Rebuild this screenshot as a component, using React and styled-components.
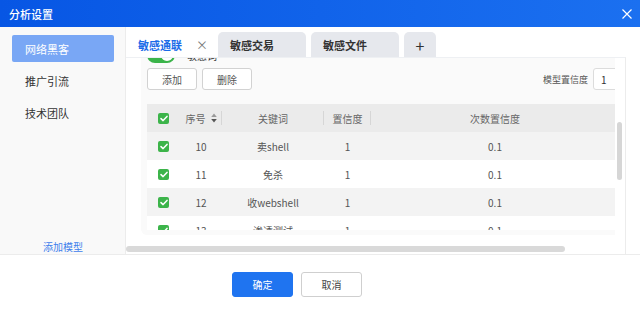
import React, { useLayoutEffect, useRef } from 'react';
import styled, { createGlobalStyle } from 'styled-components';

const GlobalStyle = createGlobalStyle`
  html, body { margin: 0; padding: 0; background: #fff; }
  body { font-family: "Noto Sans CJK SC", "Noto Sans", sans-serif; color: #333; }
  * { box-sizing: border-box; }
`;

const Dialog = styled.div`
  width: 640px;
  height: 311px;
  display: flex;
  flex-direction: column;
  background: #fff;
  overflow: hidden;
`;

const Header = styled.div`
  height: 27px;
  flex: none;
  display: flex;
  align-items: center;
  justify-content: space-between;
  padding: 0 8px 0 9px;
  background: linear-gradient(90deg, #0756e4, #1b70f0);
  color: #fff;
`;

const Title = styled.div`
  font-size: 11px;
  font-weight: 500;
`;

const Body = styled.div`
  height: 228px;
  flex: none;
  display: flex;
  border-bottom: 1px solid #ececec;
`;

const Sidebar = styled.div`
  width: 126px;
  flex: none;
  background: #f9f9f9;
  border-right: 1px solid #ececec;
  display: flex;
  flex-direction: column;
  gap: 5px;
  padding: 8px 11px 0 12px;
`;

const SideItem = styled.div`
  height: 27px;
  flex: none;
  display: flex;
  align-items: center;
  padding-left: 13px;
  font-size: 11px;
  border-radius: 2px;
  color: ${(p) => (p.$active ? '#fff' : '#333')};
  background: ${(p) => (p.$active ? '#79a7f5' : 'transparent')};
`;

const AddModel = styled.div`
  margin-top: auto;
  height: 15px;
  text-align: center;
  font-size: 10px;
  color: #3e80ec;
  line-height: 15px;
`;

const Main = styled.div`
  flex: 1;
  display: flex;
  flex-direction: column;
  min-width: 0;
`;

const TabBar = styled.div`
  height: 30px;
  flex: none;
  display: flex;
  align-items: flex-end;
  gap: 5px;
`;

const ActiveTab = styled.div`
  width: 87px;
  height: 25px;
  display: flex;
  align-items: center;
  justify-content: space-between;
  padding: 0 5px 0 12px;
  font-size: 11px;
  font-weight: 700;
  color: #1a6be8;
  background: #fff;
`;

const TabClose = styled.span`
  font-size: 12px;
  font-weight: 400;
  color: #777;
`;

const Tab = styled.div`
  width: ${(p) => p.$w || 88}px;
  height: 25px;
  display: flex;
  align-items: center;
  justify-content: ${(p) => (p.$center ? 'center' : 'flex-start')};
  padding-left: ${(p) => (p.$center ? 0 : 12)}px;
  font-size: ${(p) => (p.$center ? 16 : 11)}px;
  font-weight: ${(p) => (p.$center ? 400 : 700)};
  color: #333;
  background: #e6e8ed;
  border-radius: 5px 5px 0 0;
`;

const ScrollArea = styled.div`
  width: 500px;
  height: 197px;
  flex: none;
  display: flex;
  flex-direction: column;
  border-top: 1px solid #eef0f3;
  border-right: 1px solid #ececec;
`;

const ScrollBody = styled.div`
  height: 187px;
  flex: none;
  display: flex;
`;

const Viewport = styled.div`
  flex: 1;
  min-width: 0;
  overflow: hidden;
  padding: 0 0 30px 15px;
`;

const Gutter = styled.div`
  width: 10px;
  flex: none;
  padding: 64px 0 0 2px;
`;

const VThumb = styled.div`
  width: 5px;
  height: 58px;
  border-radius: 3px;
  background: #d6d6d6;
`;

const HBar = styled.div`
  height: 8px;
  flex: none;
  padding: 1px 0;
`;

const HThumb = styled.div`
  width: 439px;
  height: 6px;
  border-radius: 3px;
  background: #d9d9d9;
`;

const Card = styled.div`
  width: 500px;
  background: #fafafa;
  border-radius: 6px;
  padding: 10px 6px 5px;
`;

const SwitchRow = styled.div`
  height: 16px;
  display: flex;
  align-items: center;
  gap: 12px;
  font-size: 10px;
  color: #333;
`;

const Switch = styled.div`
  width: 28px;
  height: 16px;
  border-radius: 8px;
  background: #3bb44a;
  display: flex;
  align-items: center;
  justify-content: flex-end;
  padding-right: 2px;
  &::after {
    content: '';
    width: 12px;
    height: 12px;
    border-radius: 50%;
    background: #fff;
  }
`;

const Toolbar = styled.div`
  margin-top: 5px;
  height: 22px;
  display: flex;
  align-items: center;
  gap: 5px;
`;

const Btn = styled.button`
  width: 50px;
  height: 22px;
  border: 1px solid #d2d2d2;
  border-radius: 3px;
  background: #fff;
  font-family: inherit;
  font-size: 10px;
  color: #555;
  padding: 0;
`;

const RightGroup = styled.div`
  margin-left: auto;
  display: flex;
  align-items: center;
  gap: 5px;
  font-size: 9px;
  color: #555;
`;

const NumInput = styled.div`
  width: 42px;
  height: 22px;
  border: 1px solid #dcdcdc;
  border-radius: 3px;
  background: #fff;
  display: flex;
  align-items: center;
  padding-left: 7px;
  font-size: 10px;
  color: #333;
`;

const TableBox = styled.div`
  margin-top: 14px;
  width: 472px;
  height: 126px;
  overflow: hidden;
`;

const Row = styled.div`
  display: grid;
  grid-template-columns: 33px 42px 102px 47px 1fr;
  height: 28px;
  align-items: center;
  font-size: 10px;
  color: ${(p) => (p.$head ? '#666' : '#555')};
  background: ${(p) => (p.$head ? '#ebebeb' : p.$odd ? '#f3f3f3' : '#fff')};
`;

const Cell = styled.div`
  height: 28px;
  display: flex;
  align-items: center;
  justify-content: center;
  gap: 5px;
  position: relative;
  ${(p) =>
    p.$sep &&
    `&::after {
      content: '';
      position: absolute;
      right: 0;
      top: 7px;
      width: 1px;
      height: 14px;
      background: #d6d6d6;
    }`}
`;

const Check = styled.div`
  width: 11px;
  height: 11px;
  border-radius: 2px;
  background: #3cb44a;
  display: flex;
  align-items: center;
  justify-content: center;
`;

const Footer = styled.div`
  flex: 1;
  display: flex;
  align-items: center;
  justify-content: center;
  gap: 8px;
  padding: 3px 46px 0 0;
`;

const FootBtn = styled.button`
  width: 61px;
  height: 25px;
  border-radius: 3px;
  font-family: inherit;
  font-size: 10px;
  padding: 0;
  border: 1px solid ${(p) => (p.$primary ? '#1f74f0' : '#cfcfcf')};
  background: ${(p) => (p.$primary ? '#1f74f0' : '#fff')};
  color: ${(p) => (p.$primary ? '#fff' : '#444')};
`;

const CheckMark = () => (
  <Check>
    <svg width="8" height="7" viewBox="0 0 8 7">
      <path d="M1 3.6 L3.1 5.6 L7 1.4" fill="none" stroke="#fff" strokeWidth="1.5" strokeLinecap="round" strokeLinejoin="round" />
    </svg>
  </Check>
);

const SortIcon = () => (
  <svg width="6" height="10" viewBox="0 0 6 10">
    <path d="M3 0.5 L5.8 4 L0.2 4 Z" fill="#9a9a9a" />
    <path d="M3 9.5 L5.8 6 L0.2 6 Z" fill="#555" />
  </svg>
);

const rows = [
  { id: 10, kw: '卖shell', c: 1, n: '0.1' },
  { id: 11, kw: '免杀', c: 1, n: '0.1' },
  { id: 12, kw: '收webshell', c: 1, n: '0.1' },
  { id: 13, kw: '渗透测试', c: 1, n: '0.1' },
];

export default function App() {
  const vpRef = useRef(null);
  useLayoutEffect(() => {
    if (vpRef.current) vpRef.current.scrollTop = 21;
  }, []);

  return (
    <>
      <GlobalStyle />
      <Dialog>
        <Header>
          <Title>分析设置</Title>
          <svg width="10" height="10" viewBox="0 0 10 10">
            <path d="M0.5 0.5 L9.5 9.5 M9.5 0.5 L0.5 9.5" stroke="#fff" strokeWidth="1.2" />
          </svg>
        </Header>
        <Body>
          <Sidebar>
            <SideItem $active>网络黑客</SideItem>
            <SideItem>推广引流</SideItem>
            <SideItem>技术团队</SideItem>
            <AddModel>添加模型</AddModel>
          </Sidebar>
          <Main>
            <TabBar>
              <ActiveTab>
                敏感通联
                <TabClose>×</TabClose>
              </ActiveTab>
              <Tab>敏感交易</Tab>
              <Tab>敏感文件</Tab>
              <Tab $w={32} $center>+</Tab>
            </TabBar>
            <ScrollArea>
              <ScrollBody>
                <Viewport ref={vpRef}>
                  <Card>
                    <SwitchRow>
                      <Switch />
                      敏感词
                    </SwitchRow>
                    <Toolbar>
                      <Btn>添加</Btn>
                      <Btn>删除</Btn>
                      <RightGroup>
                        模型置信度
                        <NumInput>1</NumInput>
                      </RightGroup>
                    </Toolbar>
                    <TableBox>
                      <Row $head>
                        <Cell><CheckMark /></Cell>
                        <Cell $sep>序号<SortIcon /></Cell>
                        <Cell $sep>关键词</Cell>
                        <Cell $sep>置信度</Cell>
                        <Cell>次数置信度</Cell>
                      </Row>
                      {rows.map((r, i) => (
                        <Row key={r.id} $odd={i % 2 === 0}>
                          <Cell><CheckMark /></Cell>
                          <Cell>{r.id}</Cell>
                          <Cell>{r.kw}</Cell>
                          <Cell>{r.c}</Cell>
                          <Cell>{r.n}</Cell>
                        </Row>
                      ))}
                    </TableBox>
                  </Card>
                </Viewport>
                <Gutter>
                  <VThumb />
                </Gutter>
              </ScrollBody>
              <HBar>
                <HThumb />
              </HBar>
            </ScrollArea>
          </Main>
        </Body>
        <Footer>
          <FootBtn $primary>确定</FootBtn>
          <FootBtn>取消</FootBtn>
        </Footer>
      </Dialog>
    </>
  );
}
